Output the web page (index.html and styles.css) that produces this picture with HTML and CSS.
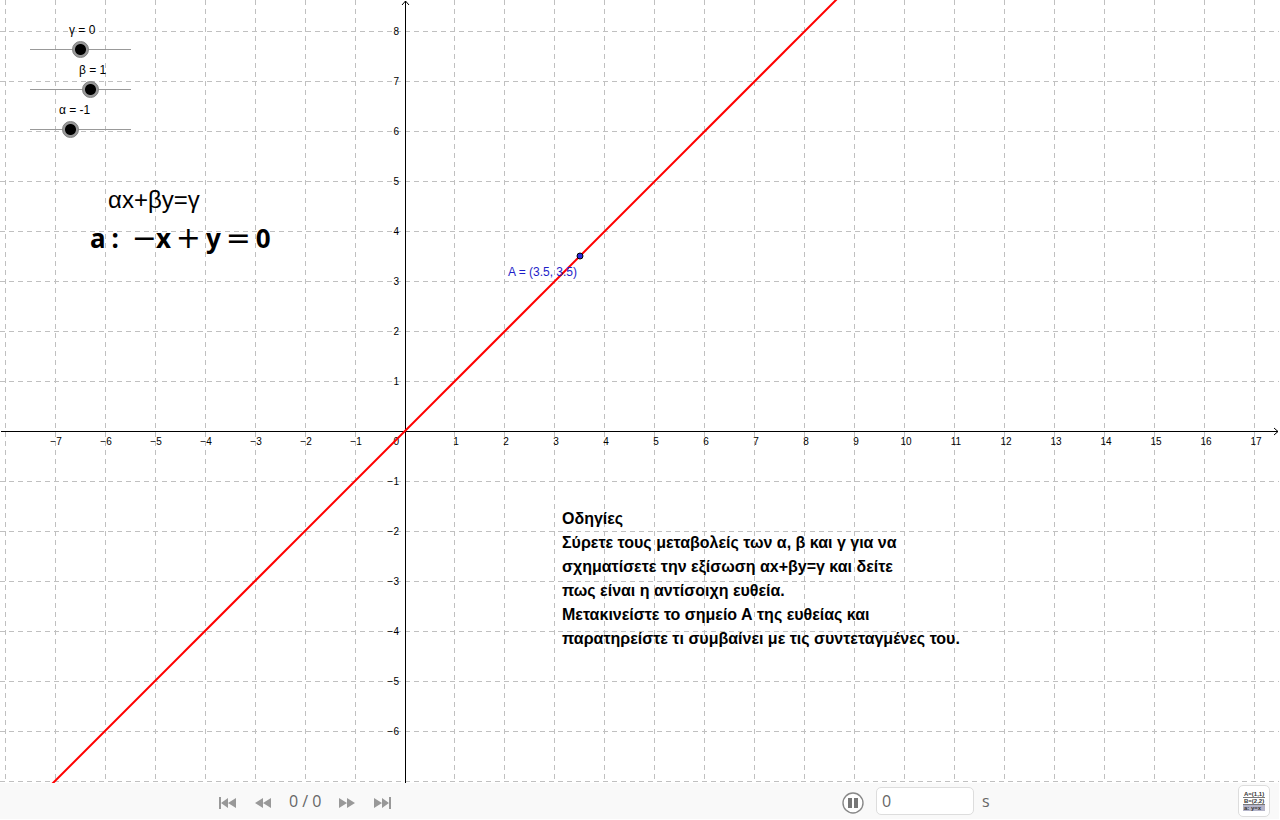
FILE: index.html
```html
<!DOCTYPE html>
<html lang="el">
<head>
    <meta charset="UTF-8">
    <meta name="viewport" content="width=device-width, initial-scale=1.0">
    <title>αx+βy=γ</title>
    <link rel="stylesheet" href="styles.css">
</head>
<body>

<main class="graph">
    <svg class="plot" id="plot" aria-hidden="true"></svg>

    <div class="sliders">
        <div class="slider">
            <label for="gamma">γ = 0</label>
            <input type="range" id="gamma" min="-5" max="5" value="0">
        </div>
        <div class="slider">
            <label for="beta">β = 1</label>
            <input type="range" id="beta" min="-5" max="5" value="1">
        </div>
        <div class="slider">
            <label for="alpha">α = -1</label>
            <input type="range" id="alpha" min="-5" max="5" value="-1">
        </div>
    </div>

    <p class="formula">αx+βy=γ</p>
    <p class="equation"><b>a</b><b>:</b><span class="term"><i>−</i><b>x</b></span><i>+</i><b>y</b><i>=</i><b>0</b></p>

    <div class="help">
        <p>Οδηγίες</p>
        <p>Σύρετε τους μεταβολείς των α, β και γ για να<br>σχηματίσετε την εξίσωση αx+βy=γ και δείτε<br>πως είναι η αντίσοιχη ευθεία.</p>
        <p>Μετακινείστε το σημείο Α της ευθείας και<br>παρατηρείστε τι συμβαίνει με τις συντεταγμένες του.</p>
    </div>
</main>

<footer class="toolbar">
    <nav class="steps">
        <button type="button" aria-label="First step">
            <svg width="17" height="12"><path d="M0 0h2v12h-2zM9 1v10L2 6zM17 1v10L9 6z"/></svg>
        </button>
        <button type="button" aria-label="Previous step">
            <svg width="17" height="12"><path d="M9 1v10L1 6zM17 1v10L9 6z"/></svg>
        </button>
        <span class="count">0 / 0</span>
        <button type="button" aria-label="Next step">
            <svg width="17" height="12"><path d="M0 1v10L8 6zM8 1v10L16 6z"/></svg>
        </button>
        <button type="button" aria-label="Last step">
            <svg width="17" height="12"><path d="M0 1v10L8 6zM8 1v10L15 6zM15 0h2v12h-2z"/></svg>
        </button>
    </nav>
    <div class="player">
        <button type="button" aria-label="Pause">
            <svg width="22" height="22"><circle cx="11" cy="11" r="10" fill="#fff" stroke="#888" stroke-width="1.4"/><path d="M6 6h4v10h-4zM12 6h4v10h-4z" fill="#777"/></svg>
        </button>
        <input type="text" id="seconds" value="0">
        <label for="seconds">s</label>
    </div>
    <button type="button" class="protocol" aria-label="Construction protocol">
        <svg width="22" height="22">
            <path d="M0 7.5h22M0 14.5h22" stroke="#777"/>
            <rect y="15" width="22" height="6" fill="#b4b4c8"/>
            <text x="1" y="6">A=(1,1)</text>
            <text x="1" y="13">B=(2,2)</text>
            <text x="1" y="20">a: y=x</text>
        </svg>
    </button>
</footer>

<script>
    const plot = document.getElementById('plot');
    const origin = { x: 405, y: 431 };
    const unit = 50;
    const pointX = 3.5;

    function value(id) {
        return Number(document.getElementById(id).value);
    }

    function toX(x) {
        return origin.x + x * unit;
    }

    function toY(y) {
        return origin.y - y * unit;
    }

    function drawGrid(width, height) {
        let lines = '';
        let labels = `<text x="399" y="445" text-anchor="end">0</text>`;

        for (let n = Math.ceil(-origin.x / unit); toX(n) < width; n++) {
            if (n === 0) continue;
            const x = toX(n) + (n > 0 ? -0.5 : 0.5);
            lines += `<path d="M${x} 0V${height}"/>`;
            if (n > -8) labels += `<text x="${toX(n) + 1}" y="445" text-anchor="middle">${String(n).replace('-', '−')}</text>`;
        }

        for (let n = Math.floor(origin.y / unit); toY(n) < height; n--) {
            if (n === 0) continue;
            lines += `<path d="M0 ${toY(n) + 0.5}H${width}"/>`;
            if (toY(n) < height - 10) labels += `<text x="399" y="${toY(n) + 4}" text-anchor="end">${String(n).replace('-', '−')}</text>`;
        }

        return `<g class="grid">${lines}</g>
            <g class="axis">
                <path d="M1 431.5H${width - 1}M${width - 5} 428l4 3.5l-4 3.5"/>
                <path d="M405.5 ${height}V1M402 5l3.5 -4l3.5 4"/>
            </g>
            <g class="numbers">${labels}</g>`;
    }

    // αx + βy = γ, vertical when β is 0
    function drawLine(width) {
        const a = value('alpha');
        const b = value('beta');
        const c = value('gamma');
        if (b === 0) {
            if (a === 0) return '';
            return `<path class="line" d="M${toX(c / a)} 0V2000"/>`;
        }
        const yAt = (x) => (c - a * x) / b;
        const left = -origin.x / unit;
        const right = (width - origin.x) / unit;
        const y = yAt(pointX);
        return `<path class="line" d="M0 ${toY(yAt(left))}L${width} ${toY(yAt(right))}"/>
            <circle class="point" cx="${toX(pointX)}" cy="${toY(y)}" r="3"/>
            <text class="point-label" x="${toX(pointX) - 72}" y="${toY(y) + 20}">A = (${pointX}, ${Math.round(y * 100) / 100})</text>`;
    }

    function draw() {
        const width = plot.clientWidth;
        const height = plot.clientHeight;
        plot.innerHTML = drawGrid(width, height) + drawLine(width);
    }

    document.querySelectorAll('.slider').forEach((slider) => {
        const input = slider.querySelector('input');
        const label = slider.querySelector('label');
        const letter = label.textContent[0];

        function update() {
            label.textContent = `${letter} = ${input.value}`;
            label.style.marginLeft = `${47 + input.value * 10}px`;
            draw();
        }

        input.addEventListener('input', update);
        update();
    });

    window.addEventListener('resize', draw);
</script>
</body>
</html>
```
FILE: styles.css
```css
* {
    box-sizing: border-box;
}

body {
    margin: 0;
    padding: 0 1px 1px 0;
    height: 100vh;
    display: flex;
    flex-direction: column;
    background: #fff;
    color: #000;
    font-family: "Liberation Sans", Arial, sans-serif;
}

p {
    margin: 0;
}

button {
    display: flex;
    padding: 0;
    border: none;
    background: none;
    cursor: pointer;
}

.graph {
    position: relative;
    flex: 1;
    min-height: 0;
    overflow: hidden;
}

.plot {
    display: block;
    width: 100%;
    height: 100%;
}

.grid {
    stroke: #c0c0c0;
    stroke-dasharray: 5 4;
}

.axis {
    fill: none;
    stroke: #000;
}

.numbers {
    font-size: 10px;
}

.line {
    stroke: #ff0000;
    stroke-width: 2;
}

.point {
    fill: #2828dc;
    stroke: #000;
}

.point-label {
    font-size: 12px;
    fill: #1e1ec8;
}

/* objects placed on the drawing pad */
.sliders {
    position: absolute;
    top: 23px;
    left: 22px;
    width: 117px;
}

.slider {
    height: 40px;
}

.slider label {
    display: block;
    font-size: 12px;
    line-height: 14px;
    margin-bottom: 4px;
    white-space: nowrap;
}

.slider input {
    display: block;
    appearance: none;
    width: 100%;
    height: 17px;
    margin: 0;
    background: linear-gradient(#999, #999) center / calc(100% - 16px) 1px no-repeat;
    cursor: pointer;
}

.slider input::-webkit-slider-thumb {
    appearance: none;
    width: 17px;
    height: 17px;
    border: 1px solid #808080;
    border-radius: 50%;
    background: radial-gradient(circle, #000 5px, #999 6px);
}

.formula {
    position: absolute;
    top: 186px;
    left: 108px;
    font-size: 24px;
    line-height: 28px;
}

.equation {
    position: absolute;
    top: 222px;
    left: 90px;
    display: flex;
    align-items: baseline;
    gap: 6px;
    font-family: "Noto Sans", sans-serif;
    font-size: 26px;
    line-height: 32px;
}

.equation i {
    display: flex;
    justify-content: center;
    width: 23px;
    font-family: "DejaVu Sans", sans-serif;
    font-size: 30px;
    font-style: normal;
}

.term {
    display: flex;
    align-items: baseline;
    margin-left: 8px;
}

.help {
    position: absolute;
    top: 507px;
    left: 562px;
    font-size: 16px;
    font-weight: bold;
    line-height: 24px;
    white-space: nowrap;
}

.toolbar {
    display: grid;
    grid-template-columns: 1fr 1fr 50px;
    align-items: center;
    height: 36px;
    background: #f9f9f9;
    color: #666;
    font-family: "Open Sans", sans-serif;
    font-size: 16px;
    line-height: 20px;
}

.steps,
.player {
    display: flex;
    align-items: center;
    justify-content: center;
    gap: 18px;
}

.steps {
    padding-right: 4px;
}

.steps svg {
    fill: #999;
}

.steps button,
.player button {
    padding-top: 3px;
}

.player {
    gap: 8px;
    padding-right: 12px;
}

.player button {
    margin-right: 4px;
}

.player input {
    width: 98px;
    height: 28px;
    padding: 0 5px;
    border: 1px solid #ddd;
    border-radius: 5px;
    background: #fff;
    color: #666;
    font: inherit;
}

.protocol {
    justify-self: center;
    width: 32px;
    height: 32px;
    align-items: center;
    justify-content: center;
    border: 1px solid #ddd;
    border-radius: 5px;
    background: #fff;
}

.protocol text {
    font-family: "Liberation Sans", sans-serif;
    font-size: 6px;
    font-weight: bold;
    fill: #333;
}
```
